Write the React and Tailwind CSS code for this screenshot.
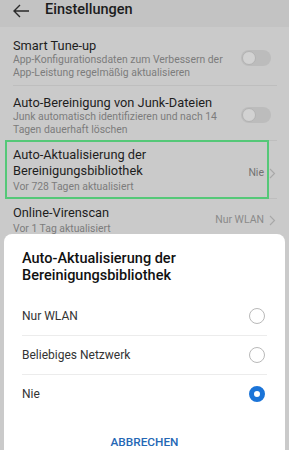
import React from "react";

function Toggle() {
  return (
    <div className="w-[30px] h-[16px] rounded-full bg-[#bcbcbc] flex items-center pl-[1px] shrink-0">
      <div className="w-[14px] h-[14px] rounded-full bg-[#d2d2d2] border border-[#b3b3b3]" />
    </div>
  );
}

function Chevron() {
  return (
    <svg width="7" height="11" viewBox="0 0 7 11" className="ml-[5px]">
      <path d="M1 1 L5.5 5.5 L1 10" fill="none" stroke="#a8a8a8" strokeWidth="1.1" />
    </svg>
  );
}

function Radio({ checked }) {
  if (checked)
    return <div className="w-[16px] h-[16px] rounded-full border-[5px] border-[#1b74d8] bg-white mr-[2px]" />;
  return <div className="w-[16px] h-[16px] rounded-full border border-[#b9b9b9] bg-white mr-[2px]" />;
}

export default function App() {
  return (
    <div
      className="relative w-[289px] h-[450px] overflow-hidden bg-[#cacaca]"
      style={{ fontFamily: "Roboto, 'Liberation Sans', sans-serif" }}
    >
      {/* Header */}
      <div className="h-[27px] bg-[#c3c3c3] flex items-start pt-[1px]">
        <svg width="18" height="18" viewBox="0 0 18 18" className="ml-[12px] mt-[1px]">
          <path d="M8 3 L2 9 L8 15 M2 9 H17" fill="none" stroke="#2a2a2a" strokeWidth="1.4" />
        </svg>
        <div className="ml-[15px] text-[14.5px] leading-[18px] text-[#1c1c1c] font-medium">Einstellungen</div>
      </div>

      {/* List */}
      <div className="pl-[13px]">
        <div className="flex items-center pr-[18px] pt-[10px] pb-[6px]">
          <div className="flex-1">
            <div className="text-[12.8px] leading-[17px] text-[#1e1e1e]">Smart Tune-up</div>
            <div className="text-[10.4px] leading-[12.5px] text-[#7c7c7c]">
              App-Konfigurationsdaten zum Verbessern der
              <br />
              App-Leistung regelmäßig aktualisieren
            </div>
          </div>
          <Toggle />
        </div>
        <div className="h-px bg-[#bebebe] mr-[12px]" />
        <div className="flex items-center pr-[18px] pt-[8px] pb-[4px]">
          <div className="flex-1">
            <div className="text-[12.8px] leading-[17px] text-[#1e1e1e]">Auto-Bereinigung von Junk-Dateien</div>
            <div className="text-[10.4px] leading-[12.5px] text-[#7c7c7c]">
              Junk automatisch identifizieren und nach 14
              <br />
              Tagen dauerhaft löschen
            </div>
          </div>
          <Toggle />
        </div>
        <div className="h-px bg-[#bebebe] mr-[12px]" />
        <div className="relative flex items-center pr-[13px] pt-[6px] pb-[5px]">
          <div className="flex-1">
            <div className="text-[12.8px] leading-[16px] text-[#1e1e1e]">
              Auto-Aktualisierung der
              <br />
              Bereinigungsbibliothek
            </div>
            <div className="text-[10.4px] leading-[13px] text-[#7c7c7c] mt-[1px]">Vor 728 Tagen aktualisiert</div>
          </div>
          <div className="flex items-center mt-[6px]">
            <span className="text-[10.5px] text-[#727272]">Nie</span>
            <Chevron />
          </div>
          <div className="absolute left-[-8px] right-[20px] top-[-1px] bottom-[-1px] border-2 border-[#55c878]" />
        </div>
        <div className="h-px bg-[#bebebe] mr-[12px]" />
        <div className="flex items-center pr-[13px] pt-[6px]">
          <div className="flex-1">
            <div className="text-[12.8px] leading-[16px] text-[#1e1e1e]">Online-Virenscan</div>
            <div className="text-[10.4px] leading-[13px] text-[#7c7c7c] mt-[1px]">Vor 1 Tag aktualisiert</div>
          </div>
          <div className="flex items-center">
            <span className="text-[10.5px] text-[#8a8a8a]">Nur WLAN</span>
            <Chevron />
          </div>
        </div>
      </div>

      {/* Dialog */}
      <div className="absolute left-[4px] right-[4px] top-[234px] bottom-0 bg-white rounded-t-[8px] px-[18px]">
        <div className="pt-[16px] pb-[13px] text-[14.5px] leading-[17px] text-[#111] font-medium">
          Auto-Aktualisierung der
          <br />
          Bereinigungsbibliothek
        </div>
        <div className="h-[38px] flex items-center justify-between">
          <span className="text-[12px] text-[#333]">Nur WLAN</span>
          <Radio />
        </div>
        <div className="h-px bg-[#ececec]" />
        <div className="h-[38px] flex items-center justify-between">
          <span className="text-[12px] text-[#333]">Beliebiges Netzwerk</span>
          <Radio />
        </div>
        <div className="h-px bg-[#ececec]" />
        <div className="h-[38px] flex items-center justify-between">
          <span className="text-[12px] text-[#333]">Nie</span>
          <Radio checked />
        </div>
        <div className="pt-[21px] text-center text-[11.8px] leading-[16px] font-medium text-[#2467b5]">ABBRECHEN</div>
      </div>
    </div>
  );
}
